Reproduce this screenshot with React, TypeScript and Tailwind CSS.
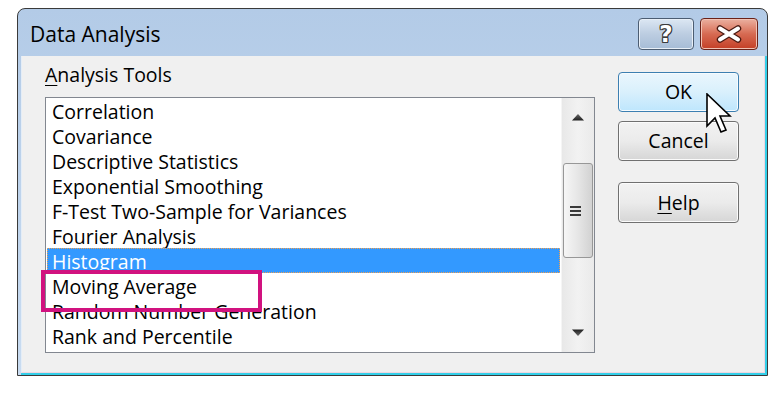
import React from "react";

const items = [
  "Correlation",
  "Covariance",
  "Descriptive Statistics",
  "Exponential Smoothing",
  "F-Test Two-Sample for Variances",
  "Fourier Analysis",
  "Histogram",
  "Moving Average",
  "Random Number Generation",
  "Rank and Percentile",
];

function UpArrow() {
  return (
    <svg width="12" height="7" viewBox="0 0 12 7">
      <defs>
        <linearGradient id="ua" x1="0" y1="0" x2="0" y2="1">
          <stop offset="0" stopColor="#6a6a6a" />
          <stop offset="1" stopColor="#1e1e1e" />
        </linearGradient>
      </defs>
      <path d="M6 0 L12 6.5 L0 6.5 Z" fill="url(#ua)" />
    </svg>
  );
}

function DownArrow() {
  return (
    <svg width="12" height="7" viewBox="0 0 12 7">
      <defs>
        <linearGradient id="da" x1="0" y1="0" x2="0" y2="1">
          <stop offset="0" stopColor="#1e1e1e" />
          <stop offset="1" stopColor="#6a6a6a" />
        </linearGradient>
      </defs>
      <path d="M0 0.5 L12 0.5 L6 7 Z" fill="url(#da)" />
    </svg>
  );
}

export default function App() {
  return (
    <div className="relative w-[781px] h-[410px] bg-white overflow-hidden pt-[8px] pl-[17px] font-['Open_Sans',sans-serif] text-black">
      <div className="w-[751px] h-[368px] flex flex-col border border-[#3a3a3a] rounded-t-[8px] bg-gradient-to-b from-[#b3cbe7] to-[#c9dcf1]">
        {/* title bar */}
        <div className="h-[47px] flex items-start justify-between pl-[12px] pr-[9px] shrink-0">
          <div className="pt-[11px] text-[21px] leading-[28px]">Data Analysis</div>
          <div className="flex gap-[6px] pt-[9px]">
            <div className="w-[56px] h-[32px] rounded-[4px] border border-[#4c5d72] bg-gradient-to-b from-[#dce7f3] via-[#bccde1] to-[#a6bcd6] flex items-center justify-center shadow-[inset_0_0_0_1px_#e8eff7]">
              <span className="text-[23px] font-bold leading-none text-white font-['DejaVu_Sans',sans-serif] [text-shadow:1px_0_0_#3b3b3b,-1px_0_0_#3b3b3b,0_1px_0_#3b3b3b,0_-1px_0_#3b3b3b,1px_1px_0_#3b3b3b,-1px_-1px_0_#3b3b3b,1px_-1px_0_#3b3b3b,-1px_1px_0_#3b3b3b]">?</span>
            </div>
            <div className="w-[58px] h-[32px] rounded-[4px] border border-[#6a2218] bg-gradient-to-b from-[#eab0a0] via-[#d66a52] to-[#c43e25] flex items-center justify-center shadow-[inset_0_0_0_1px_#f0c2b4]">
              <svg width="30" height="18" viewBox="0 0 30 18">
                <path d="M6 3.5 L24 14.5 M24 3.5 L6 14.5" stroke="#4a1a12" strokeWidth="6.5" strokeLinecap="round" />
                <path d="M6 3.5 L24 14.5 M24 3.5 L6 14.5" stroke="#ffffff" strokeWidth="4" strokeLinecap="round" />
              </svg>
            </div>
          </div>
        </div>
        {/* content frame */}
        <div className="flex-1 ml-[3px] border-r-2 border-b-2 border-[#33cfe9] flex">
          <div className="flex-1 flex border-l border-[#e4edf7] border-r border-b border-r-[#ecd7e1] border-b-[#ecd7e1] bg-[#f0f0f0]">
            {/* left column */}
            <div className="pl-[23px] flex flex-col">
              <div className="h-[41px] pt-[6px] text-[19.5px] leading-[26px]">
                <span className="underline underline-offset-[3px] decoration-1">A</span>nalysis Tools
              </div>
              <div className="w-[550px] h-[256px] border border-[#828790] bg-white flex">
                <div className="flex-1 px-[1px] flex flex-col text-[19.5px]">
                  {items.map((it) =>
                    it === "Histogram" ? (
                      <div
                        key={it}
                        className="h-[25px] leading-[25px] pl-[4px] bg-[#3399ff] text-white border border-dotted border-[#f0a050]"
                      >
                        {it}
                      </div>
                    ) : (
                      <div key={it} className="h-[25px] leading-[27px] pl-[5px]">
                        {it}
                      </div>
                    )
                  )}
                </div>
                <div className="w-[33px] flex flex-col bg-gradient-to-r from-[#e8e8e8] via-[#f2f2f2] to-[#eaeaea] border-l border-[#f5f5f5]">
                  <div className="h-[33px] flex items-center justify-center pt-[6px]">
                    <UpArrow />
                  </div>
                  <div className="h-[32px]" />
                  <div className="mx-[1px] h-[95px] rounded-[3px] border border-[#979797] bg-gradient-to-r from-[#f6f6f6] via-[#e6e6e6] to-[#d2d2d2] flex flex-col items-center justify-center gap-[2px] pr-[6px]">
                    <div className="w-[11px] h-[2px] bg-[#3a3a3a]" />
                    <div className="w-[11px] h-[2px] bg-[#3a3a3a]" />
                    <div className="w-[11px] h-[2px] bg-[#3a3a3a]" />
                  </div>
                  <div className="flex-1" />
                  <div className="h-[33px] flex items-center justify-center pb-[6px]">
                    <DownArrow />
                  </div>
                </div>
              </div>
            </div>
            {/* right column */}
            <div className="ml-[23px] pt-[16px] flex flex-col w-[121px] text-[19.5px]">
              <div className="h-[40px] rounded-[4px] border border-[#3c7fb1] bg-gradient-to-b from-[#eaf6fd] via-[#d9f0fc] to-[#bee6fd] shadow-[inset_0_0_0_1px_#f6fbfe] flex items-center justify-center">
                OK
              </div>
              <div className="mt-[9px] h-[40px] rounded-[4px] border border-[#707070] bg-gradient-to-b from-[#f2f2f2] via-[#ebebeb] to-[#d6d6d6] shadow-[inset_0_0_0_1px_#fbfbfb] flex items-center justify-center">
                Cancel
              </div>
              <div className="mt-[21px] h-[41px] rounded-[4px] border border-[#707070] bg-gradient-to-b from-[#f2f2f2] via-[#ebebeb] to-[#d6d6d6] shadow-[inset_0_0_0_1px_#fbfbfb] flex items-center justify-center">
                <span>
                  <span className="underline underline-offset-[3px] decoration-1">H</span>elp
                </span>
              </div>
            </div>
          </div>
        </div>
      </div>

      {/* magenta highlight */}
      <div className="absolute left-[41px] top-[270px] w-[221px] h-[42px] border-4 border-[#d1127f]" />

      {/* cursor */}
      <svg className="absolute left-[706px] top-[93px]" width="26" height="42" viewBox="0 0 13 21">
        <path
          d="M0.5 0.5 L0.5 16.5 L4.5 12.5 L7.5 19.5 L10 18.5 L7 11.5 L12 11.5 Z"
          fill="#ffffff"
          stroke="#000000"
          strokeWidth="0.8"
          strokeLinejoin="miter"
        />
      </svg>
    </div>
  );
}
